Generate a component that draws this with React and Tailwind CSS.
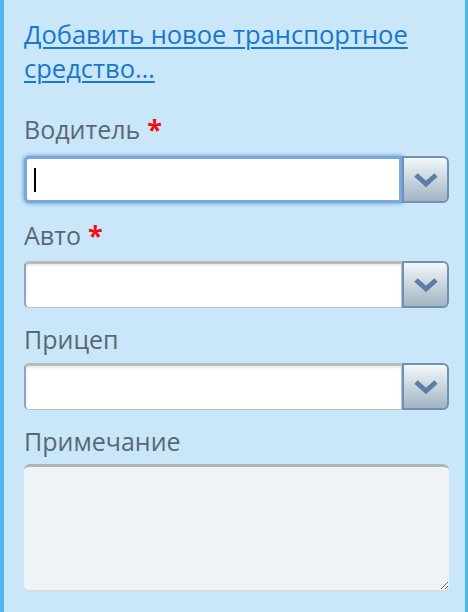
import React from 'react';

const FONT = { fontFamily: '"Open Sans", "Noto Sans", sans-serif' };

const Chevron = () => (
  <svg width="26" height="16" viewBox="0 0 26 16">
    <path d="M3 3 L13 12 L23 3" fill="none" stroke="#5b7ea6" strokeWidth="5" strokeLinejoin="miter" />
  </svg>
);

const Label = ({ children, required }) => (
  <div className="text-[25px] leading-[30px] text-[#5a6876] flex items-start gap-[7px]">
    <span>{children}</span>
    {required && <span className="text-[#f01010] text-[27px] leading-[30px] font-bold">*</span>}
  </div>
);

const Combo = ({ focused }) => (
  <div className="flex items-stretch h-[47px]">
    <div
      className={
        focused
          ? 'flex-1 rounded-l-[5px] bg-white border-[3px] border-[#7aa8dc] shadow-[0_0_4px_#4a86d0] flex items-center pl-[7px]'
          : 'flex-1 rounded-l-[5px] bg-white border border-[#b4c3d0] border-t-[3px] border-t-[#b9bcbd] border-l-[2px] border-l-[#8ea4bd] shadow-[inset_0_2px_2px_rgba(0,0,0,0.08)]'
      }
    >
      {focused && <div className="w-[2px] h-[24px] bg-black" />}
    </div>
    <div className="w-[47px] rounded-r-[6px] border-2 border-[#6f91b8] bg-gradient-to-b from-[#f2f8fb] to-[#a3b4c3] flex items-center justify-center">
      <Chevron />
    </div>
  </div>
);

export default function App() {
  return (
    <div
      style={FONT}
      className="w-[468px] h-[612px] bg-[#c9e7f8] border-l-4 border-r-[3px] border-[#4fb5e9] pl-5 pr-4 pt-[17px]"
    >
      <a href="#" className="block text-[25.5px] leading-[34px] text-[#1878cc] underline underline-offset-[3px] decoration-[1.5px]">
        Добавить новое транспортное средство…
      </a>
      <div className="mt-[29px] flex flex-col">
        <Label required>Водитель</Label>
        <div className="mt-[12px]"><Combo focused /></div>
        <div className="mt-[17px]"><Label required>Авто</Label></div>
        <div className="mt-[11px]"><Combo /></div>
        <div className="mt-[16px]"><Label>Прицеп</Label></div>
        <div className="mt-[9px]"><Combo /></div>
        <div className="mt-[16px]"><Label>Примечание</Label></div>
        <textarea className="mt-[8px] h-[128px] w-full resize rounded-[6px] bg-[#f0f3f5] border-t-[3px] border-t-[#abb5ba] border-b-[2px] border-b-[#d8dde0] outline-none" />
      </div>
    </div>
  );
}
